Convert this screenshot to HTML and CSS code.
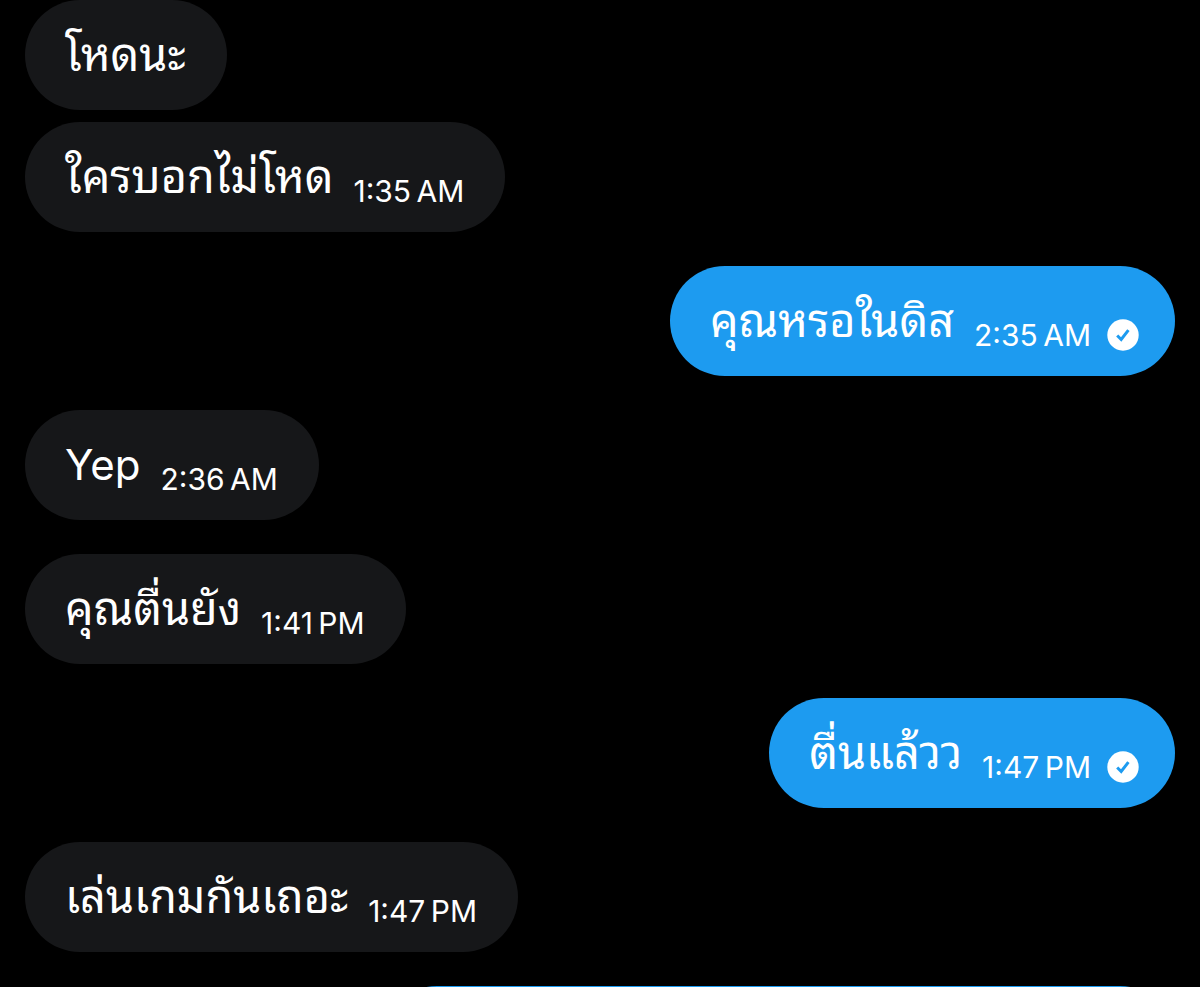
FILE: index.html
```html
<!DOCTYPE html>
<html lang="th">

<head>
    <meta charset="UTF-8">
    <meta name="viewport" content="width=device-width, initial-scale=1.0">
    <title>Messages</title>
    <link rel="stylesheet" href="styles.css">
</head>

<body>
    <main class="chat">
        <div class="message received">
            <p class="text">โหดนะ</p>
        </div>
        <div class="message received grouped">
            <p class="text">ใครบอกไม่โหด</p>
            <time class="time">1:35&#8239;AM</time>
        </div>
        <div class="message sent">
            <p class="text">คุณหรอในดิส</p>
            <time class="time">2:35&#8239;AM</time>
            <svg class="check" viewBox="0 0 32 32" role="img" aria-label="Sent">
                <circle cx="16" cy="16" r="15.7" fill="#fff" />
                <path d="M10.2 16.5l4 4 7.2-9.3" fill="none" stroke="#1d9bf0" stroke-width="3" />
            </svg>
        </div>
        <div class="message received">
            <p class="text latin">Yep</p>
            <time class="time">2:36&#8239;AM</time>
        </div>
        <div class="message received">
            <p class="text">คุณตื่นยัง</p>
            <time class="time">1:41&#8239;PM</time>
        </div>
        <div class="message sent">
            <p class="text">ตื่นแล้วว</p>
            <time class="time">1:47&#8239;PM</time>
            <svg class="check" viewBox="0 0 32 32" role="img" aria-label="Sent">
                <circle cx="16" cy="16" r="15.7" fill="#fff" />
                <path d="M10.2 16.5l4 4 7.2-9.3" fill="none" stroke="#1d9bf0" stroke-width="3" />
            </svg>
        </div>
        <div class="message received">
            <p class="text">เล่นเกมกันเถอะ</p>
            <time class="time">1:47&#8239;PM</time>
        </div>
        <div class="message sent next"></div>
    </main>
</body>

</html>
```

FILE: styles.css
```css
* {
    box-sizing: border-box;
}

body {
    margin: 0;
    height: 100vh;
    overflow: hidden;
    background-color: #000;
    color: #fff;
    font-family: Inter, "Noto Sans Thai Looped", Thonburi, Loma, Garuda, Waree, Laksaman, "Noto Sans", sans-serif;
}

.chat {
    display: flex;
    flex-direction: column;
    gap: 34px;
    height: 100%;
    padding: 0 25px;
    overflow: hidden;
}

.message {
    display: flex;
    align-items: flex-end;
    flex-shrink: 0;
    height: 110px;
    padding: 0 41px 25px 40px;
    border-radius: 55px;
}

.received {
    align-self: flex-start;
    background-color: #161719;
}

.sent {
    align-self: flex-end;
    padding-right: 36px;
    background-color: #1d9bf0;
}

.grouped {
    margin-top: -22px;
}

.text {
    margin: 0;
    font-size: 45px;
    line-height: 60px;
}

.latin {
    font-size: 42px;
}

.time {
    margin-left: 20px;
    font-size: 30px;
    line-height: 32px;
}

.check {
    width: 32px;
    height: 32px;
    margin-left: 16px;
}

.next {
    width: 69%;
}
```
